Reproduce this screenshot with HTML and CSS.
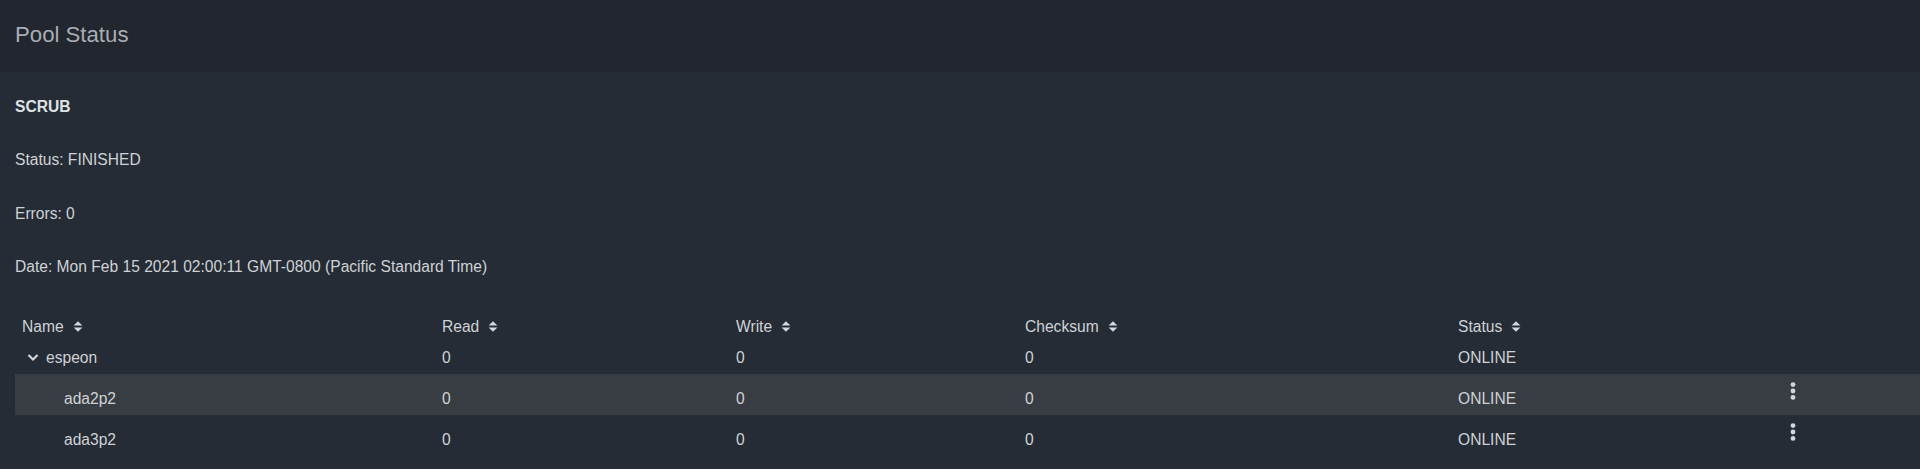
FILE: index.html
```html
<!DOCTYPE html>
<html lang="en">
<head>
  <meta charset="UTF-8" />
  <title>Pool Status</title>
  <link rel="stylesheet" href="styles.css">
</head>
<body>
  <header class="page-header">
    <h1 class="page-title">Pool Status</h1>
  </header>

  <main class="content">
    <h2 class="scrub-title">SCRUB</h2>
    <p class="scrub-line">Status: FINISHED</p>
    <p class="scrub-line">Errors: 0</p>
    <p class="scrub-line">Date: Mon Feb 15 2021 02:00:11 GMT-0800 (Pacific Standard Time)</p>

    <table class="pool-table">
      <colgroup>
        <col class="col-name">
        <col class="col-read">
        <col class="col-write">
        <col class="col-checksum">
        <col class="col-status">
        <col>
      </colgroup>
      <thead>
        <tr>
          <th>Name<svg class="sort" viewBox="0 0 10 11"><path d="M0.6 4.4 L5 0.2 L9.4 4.4 Z M0.6 6.4 L9.4 6.4 L5 10.7 Z" /></svg></th>
          <th>Read<svg class="sort" viewBox="0 0 10 11"><path d="M0.6 4.4 L5 0.2 L9.4 4.4 Z M0.6 6.4 L9.4 6.4 L5 10.7 Z" /></svg></th>
          <th>Write<svg class="sort" viewBox="0 0 10 11"><path d="M0.6 4.4 L5 0.2 L9.4 4.4 Z M0.6 6.4 L9.4 6.4 L5 10.7 Z" /></svg></th>
          <th>Checksum<svg class="sort" viewBox="0 0 10 11"><path d="M0.6 4.4 L5 0.2 L9.4 4.4 Z M0.6 6.4 L9.4 6.4 L5 10.7 Z" /></svg></th>
          <th>Status<svg class="sort" viewBox="0 0 10 11"><path d="M0.6 4.4 L5 0.2 L9.4 4.4 Z M0.6 6.4 L9.4 6.4 L5 10.7 Z" /></svg></th>
          <th></th>
        </tr>
      </thead>
      <tbody>
        <tr class="row-pool">
          <td><svg class="toggle" viewBox="0 0 12 9"><polyline points="1.5,2 6,6.5 10.5,2" /></svg>espeon</td>
          <td>0</td>
          <td>0</td>
          <td>0</td>
          <td>ONLINE</td>
          <td></td>
        </tr>
        <tr class="row-disk active">
          <td class="disk-name">ada2p2</td>
          <td>0</td>
          <td>0</td>
          <td>0</td>
          <td>ONLINE</td>
          <td class="actions"><svg class="kebab" viewBox="0 0 6 18"><circle cx="3" cy="2.6" r="2.4" /><circle cx="3" cy="9" r="2.4" /><circle cx="3" cy="15.4" r="2.4" /></svg></td>
        </tr>
        <tr class="row-disk">
          <td class="disk-name">ada3p2</td>
          <td>0</td>
          <td>0</td>
          <td>0</td>
          <td>ONLINE</td>
          <td class="actions"><svg class="kebab" viewBox="0 0 6 18"><circle cx="3" cy="2.6" r="2.4" /><circle cx="3" cy="9" r="2.4" /><circle cx="3" cy="15.4" r="2.4" /></svg></td>
        </tr>
      </tbody>
    </table>
  </main>
</body>
</html>
```

FILE: styles.css
```css
* { margin: 0; padding: 0; box-sizing: border-box; }

body {
  font-family: 'Liberation Sans', Arial, sans-serif;
  font-size: 15.6px;
  line-height: 18px;
  color: #cfd2d6;
  background-color: #252c35;
  overflow: hidden;
}

.page-header {
  height: 70px;
  padding-left: 15px;
  background-color: #21262f;
  box-shadow: 0 1px 2px rgba(0, 0, 0, 0.25);
}

.page-title {
  font-size: 22.2px;
  font-weight: normal;
  line-height: 70px;
  color: #a9aeb4;
}

.content {
  display: flex;
  flex-direction: column;
  gap: 35.5px;
  padding: 27.7px 0 0 15px;
}

.scrub-title {
  font-size: 15.6px;
  font-weight: bold;
  color: #dfe2e5;
}

.pool-table {
  width: 100%;
  border-collapse: collapse;
  table-layout: fixed;
}

.col-name { width: 420px; }
.col-read { width: 294px; }
.col-write { width: 289px; }
.col-checksum { width: 433px; }
.col-status { width: 330px; }

.pool-table th,
.pool-table td {
  padding: 6px 0 7px 7px;
  text-align: left;
  font-weight: normal;
  white-space: nowrap;
}

.sort {
  width: 10px;
  height: 11px;
  margin-left: 9px;
  fill: #d3d6da;
}

.toggle {
  width: 12px;
  height: 9px;
  margin: 0 7px 0 5px;
  vertical-align: 1px;
  fill: none;
  stroke: #d3d6da;
  stroke-width: 2.2;
}

.row-disk td {
  padding-top: 16px;
}

.row-disk .disk-name {
  padding-left: 49px;
}

.row-disk.active {
  background-color: #383d44;
}

.pool-table td.actions {
  vertical-align: top;
  padding-top: 8px;
}

.kebab {
  display: block;
  width: 6px;
  height: 18px;
  margin-left: 2px;
  fill: #d3d6da;
}
```
